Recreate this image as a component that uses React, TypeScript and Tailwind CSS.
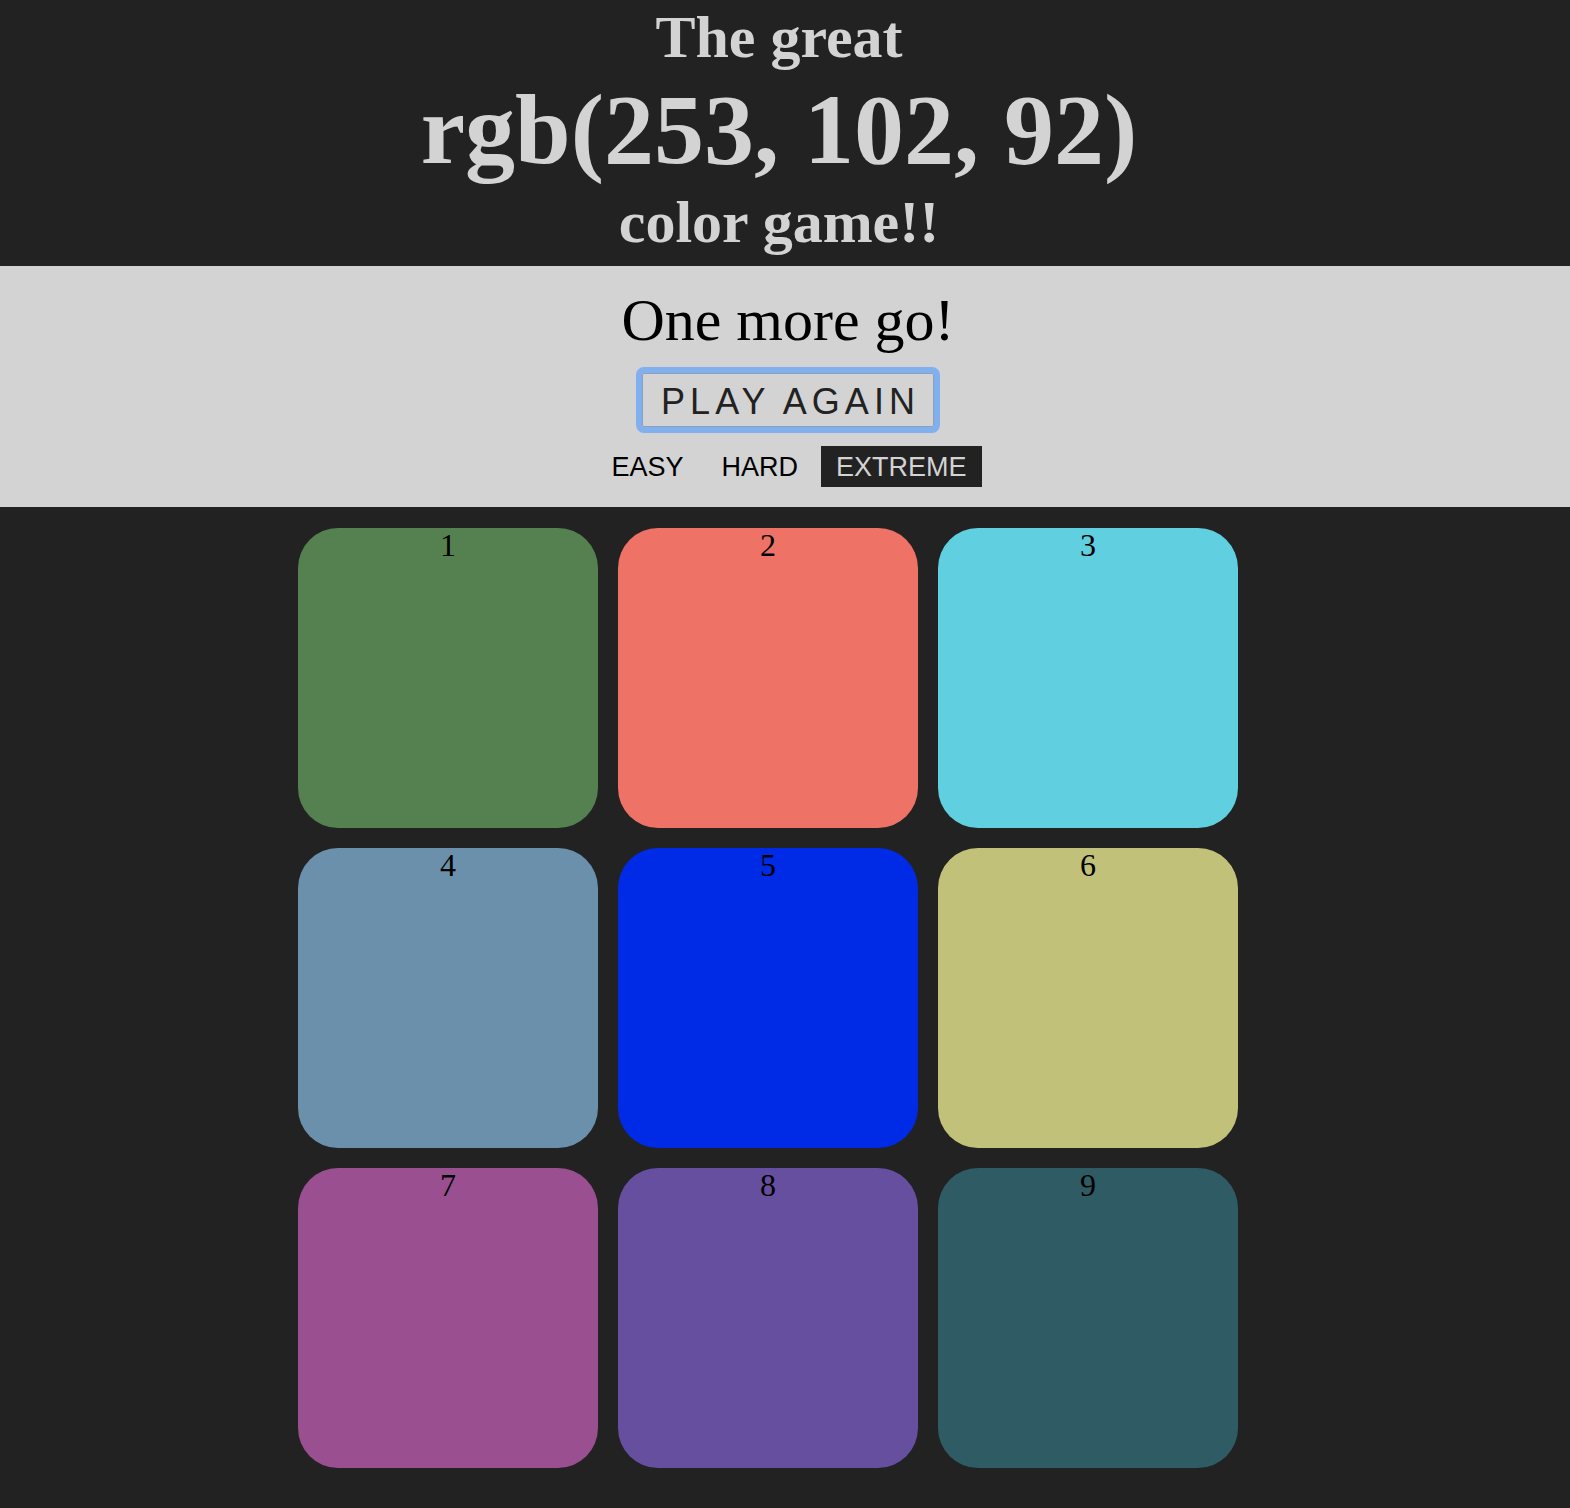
const squares = [
  { id: 1, color: "bg-[#558050]" },
  { id: 2, color: "bg-[#ee7265]" },
  { id: 3, color: "bg-[#60cfe0]" },
  { id: 4, color: "bg-[#6a90ab]" },
  { id: 5, color: "bg-[#002be6]" },
  { id: 6, color: "bg-[#c2c17a]" },
  { id: 7, color: "bg-[#9a5090]" },
  { id: 8, color: "bg-[#674fa0]" },
  { id: 9, color: "bg-[#2f5b64]" },
];

const serif = "font-['Liberation_Serif',_'Times_New_Roman',_serif]";
const sans = "font-['Liberation_Sans',_Arial,_sans-serif]";

export default function App() {
  return (
    <div className={`min-h-screen bg-[#222222] ${serif}`}>
      {/* header */}
      <h1 className="text-center font-bold text-[#d3d3d3] pb-[7px] pr-[12px]">
        <div className="text-[60px] leading-[74px]">The great</div>
        <div className="text-[100px] leading-[111px]">rgb(253, 102, 92)</div>
        <div className="text-[60px] leading-[74px]">color game!!</div>
      </h1>

      {/* status bar */}
      <div className="bg-[#d3d3d3] flex flex-col items-center pt-[19px] pb-[20px]">
        <div className="text-[60px] leading-[70px] text-black pl-[6px]">One more go!</div>
        <button
          className={`${sans} ml-[6px] mt-[18px] w-[292px] h-[54px] pt-[8px] pb-[4px] border border-[#8d9fbd] rounded-[2px] outline-[6px] outline-solid outline-[#80b1ee] text-[36px] leading-[40px] tracking-[5px] text-[#222222] flex justify-center pl-[5px]`}
        >
          PLAY AGAIN
        </button>
        <div className={`${sans} ml-[8px] mt-[19px] flex gap-[8px] text-[27px]`}>
          <span className="px-[15px] pt-[5px] pb-[4px] leading-[32px] text-black">EASY</span>
          <span className="px-[15px] pt-[5px] pb-[4px] leading-[32px] text-black">HARD</span>
          <span className="px-[15px] pt-[5px] pb-[4px] leading-[32px] bg-[#222222] text-[#d3d3d3]">EXTREME</span>
        </div>
      </div>

      {/* squares */}
      <div className="pt-[21px] pb-[40px] pl-[298px]">
        <div className="grid grid-cols-[repeat(3,300px)] gap-[20px]">
          {squares.map((s) => (
            <div
              key={s.id}
              className={`${s.color} w-[300px] h-[300px] rounded-[40px] text-center text-black text-[32px] leading-[34px]`}
            >
              {s.id}
            </div>
          ))}
        </div>
      </div>
    </div>
  );
}
